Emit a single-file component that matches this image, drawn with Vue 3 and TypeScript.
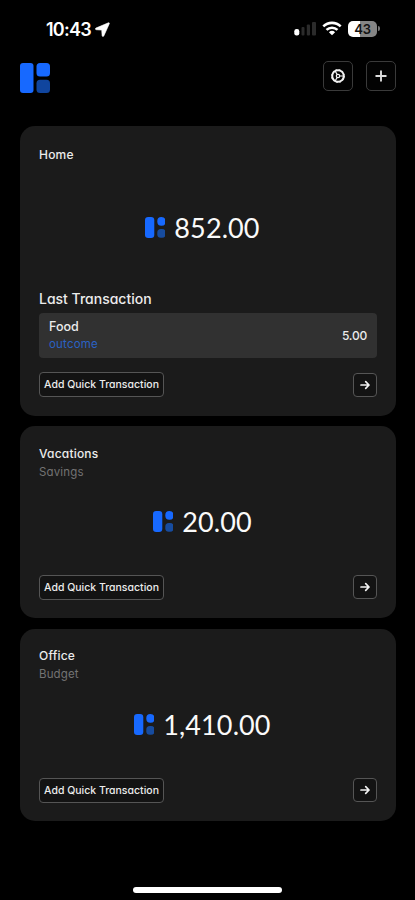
<script setup lang="ts">
interface Transaction {
  name: string
  kind: string
  amount: string
}
interface Wallet {
  id: string
  name: string
  type?: string
  amount: string
  last?: Transaction
}

const wallets: Wallet[] = [
  { id: 'home', name: 'Home', amount: '852.00', last: { name: 'Food', kind: 'outcome', amount: '5.00' } },
  { id: 'vacations', name: 'Vacations', type: 'Savings', amount: '20.00' },
  { id: 'office', name: 'Office', type: 'Budget', amount: '1,410.00' },
]
</script>

<template>
  <div class="screen">
    <div class="status">
      <div class="clock">
        <span class="time">10:43</span>
        <svg class="location" width="15" height="15" viewBox="0 0 15 15">
          <path d="M13.4 .8 .9 6.100c-.8.4-.6 1.500.2 1.600l5.600.4.4 5.600c.1.9 1.300 1 1.700.2L14.300 1.700c.2-.7-.2-1.100-.9-.9z" fill="#fff" stroke="#fff" stroke-width="0.600" />
        </svg>
      </div>
      <div class="indicators">
        <svg class="signal" width="24" height="15" viewBox="0 0 24 15">
          <rect x="0.300" y="8" width="5" height="6.500" rx="2.200" fill="#fff" />
          <rect x="7.500" y="6" width="3" height="8.500" rx="1" fill="#2b2b2b" />
          <rect x="12.800" y="3.500" width="3.200" height="11" rx="1" fill="#2b2b2b" />
          <rect x="18" y="1" width="4" height="13.500" rx="1" fill="#2b2b2b" />
        </svg>
        <svg class="wifi" width="20" height="15" viewBox="0 0 20 15">
          <g fill="none" stroke="#fff" stroke-width="2.600">
            <path d="M1.300 5.400a12.600 12.600 0 0 1 17.400 0" />
            <path d="M4.500 8.900a8 8 0 0 1 11 0" />
          </g>
          <path d="M10 14.300 6.900 11.200a4.600 4.600 0 0 1 6.200 0z" fill="#fff" />
        </svg>
        <div class="battery"><span>43</span></div>
        <i class="cap"></i>
      </div>
    </div>

    <header class="top">
      <svg class="brand" viewBox="0 0 30 30">
        <rect width="13.500" height="30" rx="3" fill="#1769ff" />
        <rect x="16.500" width="13.500" height="13.500" rx="3.500" fill="#1769ff" />
        <rect x="16.500" y="16.800" width="13.500" height="13.200" rx="3.500" fill="#10459e" />
      </svg>
      <div class="actions">
        <button class="square" aria-label="Settings">
          <svg width="16" height="16" viewBox="0 0 16 16" fill="none" stroke="#f2f2f2">
            <circle cx="8" cy="8" r="5.800" stroke-width="2" />
            <circle cx="8" cy="8" r="6.500" stroke-width="0.900" stroke-dasharray="1.700 1.703" />
            <circle cx="8" cy="8" r="1.700" stroke-width="1.200" />
            <path d="M9.800 8h4M7.100 6.400l-2-3.400M7.100 9.600l-2 3.400" stroke-width="1.200" />
          </svg>
        </button>
        <button class="square" aria-label="Add">
          <svg width="14" height="14" viewBox="0 0 14 14" fill="none" stroke="#dcdcdc" stroke-width="1.900" stroke-linecap="round">
            <path d="M7 2.200v9.600M2.200 7h9.600" />
          </svg>
        </button>
      </div>
    </header>

    <main class="list">
      <section v-for="w in wallets" :key="w.id" class="card" :class="{ tall: w.last }">
        <h2 class="name">{{ w.name }}</h2>
        <p v-if="w.type" class="type">{{ w.type }}</p>
        <div class="amount">
          <svg class="mark" viewBox="0 0 20.500 21">
            <rect width="9.300" height="21" rx="3.200" fill="#1769ff" />
            <rect x="12.300" width="8.200" height="8.800" rx="4" fill="#1769ff" />
            <rect x="12.300" y="12" width="8.200" height="8.800" rx="3.500" fill="#174c9f" />
          </svg>
          <span>{{ w.amount }}</span>
        </div>
        <template v-if="w.last">
          <h3 class="label">Last Transaction</h3>
          <div class="row">
            <div>
              <div class="item">{{ w.last.name }}</div>
              <div class="kind">{{ w.last.kind }}</div>
            </div>
            <div class="sum">{{ w.last.amount }}</div>
          </div>
        </template>
        <div class="foot">
          <button class="quick">Add Quick Transaction</button>
          <button class="go" aria-label="Open">
            <svg width="12" height="12" viewBox="0 0 12 12" fill="none" stroke="#f2f2f2" stroke-width="1.700" stroke-linecap="round" stroke-linejoin="round">
              <path d="M2 6h8M6.700 2.700 10 6 6.700 9.300" />
            </svg>
          </button>
        </div>
      </section>
    </main>
    <div class="indicator"></div>
  </div>
</template>

<style>
body {
  background: #000;
}
</style>

<style scoped>
.screen {
  box-sizing: border-box;
  width: 415px;
  height: 900px;
  display: flex;
  flex-direction: column;
  background: #000;
  color: #ececec;
  font-family: Inter, "Liberation Sans", sans-serif;
  font-feature-settings: "cv11";
  overflow: hidden;
}
h2, h3, p {
  margin: 0;
}
button {
  padding: 0;
  margin: 0;
  box-sizing: border-box;
  font: inherit;
  font-feature-settings: inherit;
  color: inherit;
  display: flex;
  align-items: center;
  justify-content: center;
}
.status {
  height: 60px;
  box-sizing: border-box;
  padding: 19px 35px 0 46px;
  display: flex;
  justify-content: space-between;
}
.clock {
  display: flex;
  height: 20px;
  align-items: center;
  gap: 4px;
}
.time {
  font-size: 18px;
  font-weight: 600;
  letter-spacing: -0.750px;
  color: #fff;
}
.indicators {
  display: flex;
  height: 19px;
  align-items: center;
}
.signal {
  margin-right: 4px;
}
.wifi {
  margin-right: 6px;
}
.battery {
  width: 29px;
  height: 16px;
  border-radius: 5px;
  background: linear-gradient(90deg, #fff 43%, #858585 43%);
  color: #111;
  display: flex;
  align-items: center;
  justify-content: center;
  font-size: 13px;
  font-weight: 600;
  letter-spacing: -0.300px;
}
.cap {
  width: 2px;
  height: 5px;
  margin-left: 1px;
  border-radius: 0 2px 2px 0;
  background: #777;
}
.top {
  height: 66px;
  box-sizing: border-box;
  padding: 0 19px 0 19.500px;
  display: flex;
  justify-content: space-between;
  align-items: flex-start;
}
.brand {
  width: 30px;
  height: 30px;
  margin-top: 2.500px;
}
.actions {
  display: flex;
  gap: 13px;
}
.square {
  width: 30px;
  height: 30px;
  margin-top: 1px;
  border: 1px solid #3a3a3a;
  border-radius: 5px;
  background: #030303;
}
.list {
  display: flex;
  flex-direction: column;
  gap: 10.500px;
  padding: 0 19px 0 20px;
}
.card {
  box-sizing: border-box;
  height: 192.300px;
  padding: 18.500px 19px;
  border-radius: 15px;
  background: #1b1b1b;
  display: flex;
  flex-direction: column;
}
.card.tall {
  height: 289.500px;
  padding-top: 19.500px;
}
.name {
  font-size: 12px;
  line-height: 18px;
  font-weight: 500;
  letter-spacing: 0.200px;
}
.type {
  font-size: 11.500px;
  line-height: 18px;
  letter-spacing: 0.150px;
  color: #737373;
}
.amount {
  margin-top: 16px;
  height: 50px;
  display: flex;
  align-items: center;
  justify-content: center;
  gap: 9px;
  padding-right: 11.500px;
  font-family: Lato, sans-serif;
  font-size: 27px;
  letter-spacing: 0.100px;
  color: #fafafa;
}
.tall .amount {
  margin-top: 39px;
}
.mark {
  width: 20.500px;
  height: 21px;
}
.label {
  margin-top: 36px;
  font-size: 14px;
  line-height: 20px;
  font-weight: 500;
}
.row {
  margin-top: 4px;
  height: 45px;
  box-sizing: border-box;
  padding: 5px 10px;
  border-radius: 4px;
  background: #313131;
  display: flex;
  justify-content: space-between;
  align-items: center;
}
.item {
  font-size: 12.500px;
  font-weight: 500;
  line-height: 18px;
}
.kind {
  font-size: 11.500px;
  line-height: 17px;
  letter-spacing: 0.200px;
  color: #2a62c4;
}
.sum {
  font-size: 12px;
  font-weight: 500;
  letter-spacing: -0.200px;
}
.foot {
  margin-top: auto;
  display: flex;
  justify-content: space-between;
  align-items: center;
}
.quick {
  width: 125px;
  height: 25px;
  border: 1px solid #555;
  border-radius: 4px;
  background: #131313;
  font-size: 10.500px;
  font-weight: 500;
  white-space: nowrap;
}
.go {
  width: 24px;
  height: 24px;
  border: 1px solid #555;
  border-radius: 4px;
  background: #131313;
}
.indicator {
  width: 149px;
  height: 6px;
  margin: auto 0 7px 133px;
  border-radius: 3px;
  background: #fff;
}
</style>
